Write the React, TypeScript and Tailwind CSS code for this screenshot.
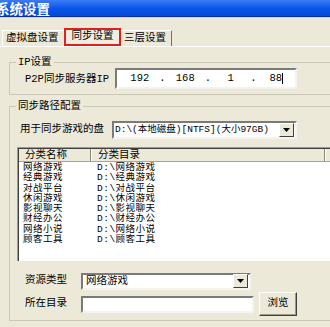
import React from 'react'

const rows = [
  ['网络游戏', 'D:\\网络游戏'],
  ['经典游戏', 'D:\\经典游戏'],
  ['对战平台', 'D:\\对战平台'],
  ['休闲游戏', 'D:\\休闲游戏'],
  ['影视聊天', 'D:\\影视聊天'],
  ['财经办公', 'D:\\财经办公'],
  ['网络小说', 'D:\\网络小说'],
  ['顾客工具', 'D:\\顾客工具']
]

function Arrow () {
  return (
    <div className="w-[15px] h-[14px] mr-[1px] flex items-center justify-center bg-[#ece9d8] border border-t-white border-l-white border-b-[#404040] border-r-[#404040]">
      <svg width="7" height="4" viewBox="0 0 7 4"><path d="M0 0h7L3.5 4z" fill="#000" /></svg>
    </div>
  )
}

export default function App () {
  return (
    <div className="w-[330px] h-[327px] overflow-hidden bg-[#ece9d8] text-black font-['Liberation_Mono','Noto_Sans_CJK_SC',monospace] text-[10.5px]">
      {/* title bar */}
      <div className="h-[17px] bg-linear-to-b from-[#3b7cf7] via-[#0a56ea] to-[#064bd8] border-b border-[#0a2f9c] flex items-center">
        <span className="-ml-[4px] text-white font-bold text-[13.5px] leading-[14px] font-['Noto_Sans_CJK_SC',sans-serif]">系统设置</span>
      </div>
      <div className="h-px bg-[#cdd6e6]" />

      {/* tabs */}
      <div className="h-[28px] flex items-end pl-[2px]">
        <div className="h-[16px] w-[62px] flex items-center pl-[3px] border-l border-t border-white">虚拟盘设置</div>
        <div className="h-[18px] w-[57px] flex items-center justify-center border-2 border-[#e0201c] bg-[#efece0]">同步设置</div>
        <div className="h-[16px] w-[51px] flex items-center pl-[3px] border-t border-white border-r border-r-[#707070]">三层设置</div>
      </div>

      {/* panel */}
      <div className="border-t border-white">
        <fieldset className="mt-[10px] ml-[9px] w-[340px] border border-[#cbc8b8] pl-[15px] pb-[5px]">
          <legend className="ml-[-9px] px-[2px] leading-[11px]">IP设置</legend>
          <div className="flex items-center h-[21px]">
            <span className="w-[90px] pt-[2px]">P2P同步服务器IP</span>
            <div className="w-[182px] h-[21px] bg-white border-2 border-t-[#7a7a7a] border-l-[#7a7a7a] border-b-[#f4f3ee] border-r-[#f4f3ee] flex items-center pl-[4px]">
              <span className="w-[38px] text-center">192</span>
              <span className="w-[8px] text-center">.</span>
              <span className="w-[38px] text-center">168</span>
              <span className="w-[8px] text-center">.</span>
              <span className="w-[38px] text-center">1</span>
              <span className="w-[8px] text-center">.</span>
              <span className="w-[38px] text-center flex items-center justify-center">88<span className="w-px h-[11px] bg-black" /></span>
            </div>
          </div>
        </fieldset>

        <fieldset className="mt-[6px] ml-[9px] w-[340px] border border-[#cbc8b8] pb-[4px]">
          <legend className="ml-[6px] px-[2px] leading-[11px]">同步路径配置</legend>

          <div className="mt-[9px] flex items-center h-[18px] pl-[10px]">
            <span className="w-[92px]">用于同步游戏的盘</span>
            <div className="w-[185px] h-[18px] bg-white border-2 border-t-[#7a7a7a] border-l-[#7a7a7a] border-b-[#f4f3ee] border-r-[#f4f3ee] flex items-center justify-between">
              <span className="pl-[1px] text-[9.5px] leading-[12px]">D:\(本地磁盘)[NTFS](大小97GB)</span>
              <Arrow />
            </div>
          </div>

          {/* list */}
          <div className="mt-[8px] ml-[7px] w-[330px] h-[114px] bg-white border-t border-l border-[#9a9a9a]">
            <div className="h-full border-t border-l border-[#404040]">
              <div className="h-[13px] flex bg-[#ece9d8] border-b border-[#a8a598] leading-[12px]">
                <div className="w-[72px] pl-[6px] border-r border-[#8a8778]">分类名称</div>
                <div className="w-[234px] pl-[6px] border-l border-white border-r border-r-[#8a8778]">分类目录</div>
                <div className="flex-1 border-l border-white" />
              </div>
              <div className="pt-[1px] text-[9.5px] tracking-[0.5px]">
                {rows.map(([name, dir]) => (
                  <div key={name} className="flex h-[10.25px] leading-[10.25px]">
                    <div className="w-[72px] pl-[4px]">{name}</div>
                    <div className="pl-[6px]">{dir}</div>
                  </div>
                ))}
              </div>
            </div>
          </div>

          <div className="mt-[12px] flex items-center h-[16px] pl-[15px]">
            <span className="w-[56px]">资源类型</span>
            <div className="w-[170px] h-[17px] bg-white border-2 border-t-[#7a7a7a] border-l-[#7a7a7a] border-b-[#f4f3ee] border-r-[#f4f3ee] flex items-center justify-between">
              <span className="pl-[3px] leading-[12px]">网络游戏</span>
              <Arrow />
            </div>
          </div>

          <div className="mt-[3px] flex items-center h-[24px] pl-[15px]">
            <span className="w-[56px]">所在目录</span>
            <div className="w-[173px] h-[17px] bg-white border-2 border-t-[#7a7a7a] border-l-[#7a7a7a] border-b-[#f4f3ee] border-r-[#f4f3ee]" />
            <div className="ml-[5px] w-[38px] h-[24px] flex items-center justify-center bg-[#ece9d8] border border-t-white border-l-white border-b-[#404040] border-r-[#404040] shadow-[inset_-1px_-1px_0_#9d9a8a]">浏览</div>
          </div>
        </fieldset>
      </div>
    </div>
  )
}
